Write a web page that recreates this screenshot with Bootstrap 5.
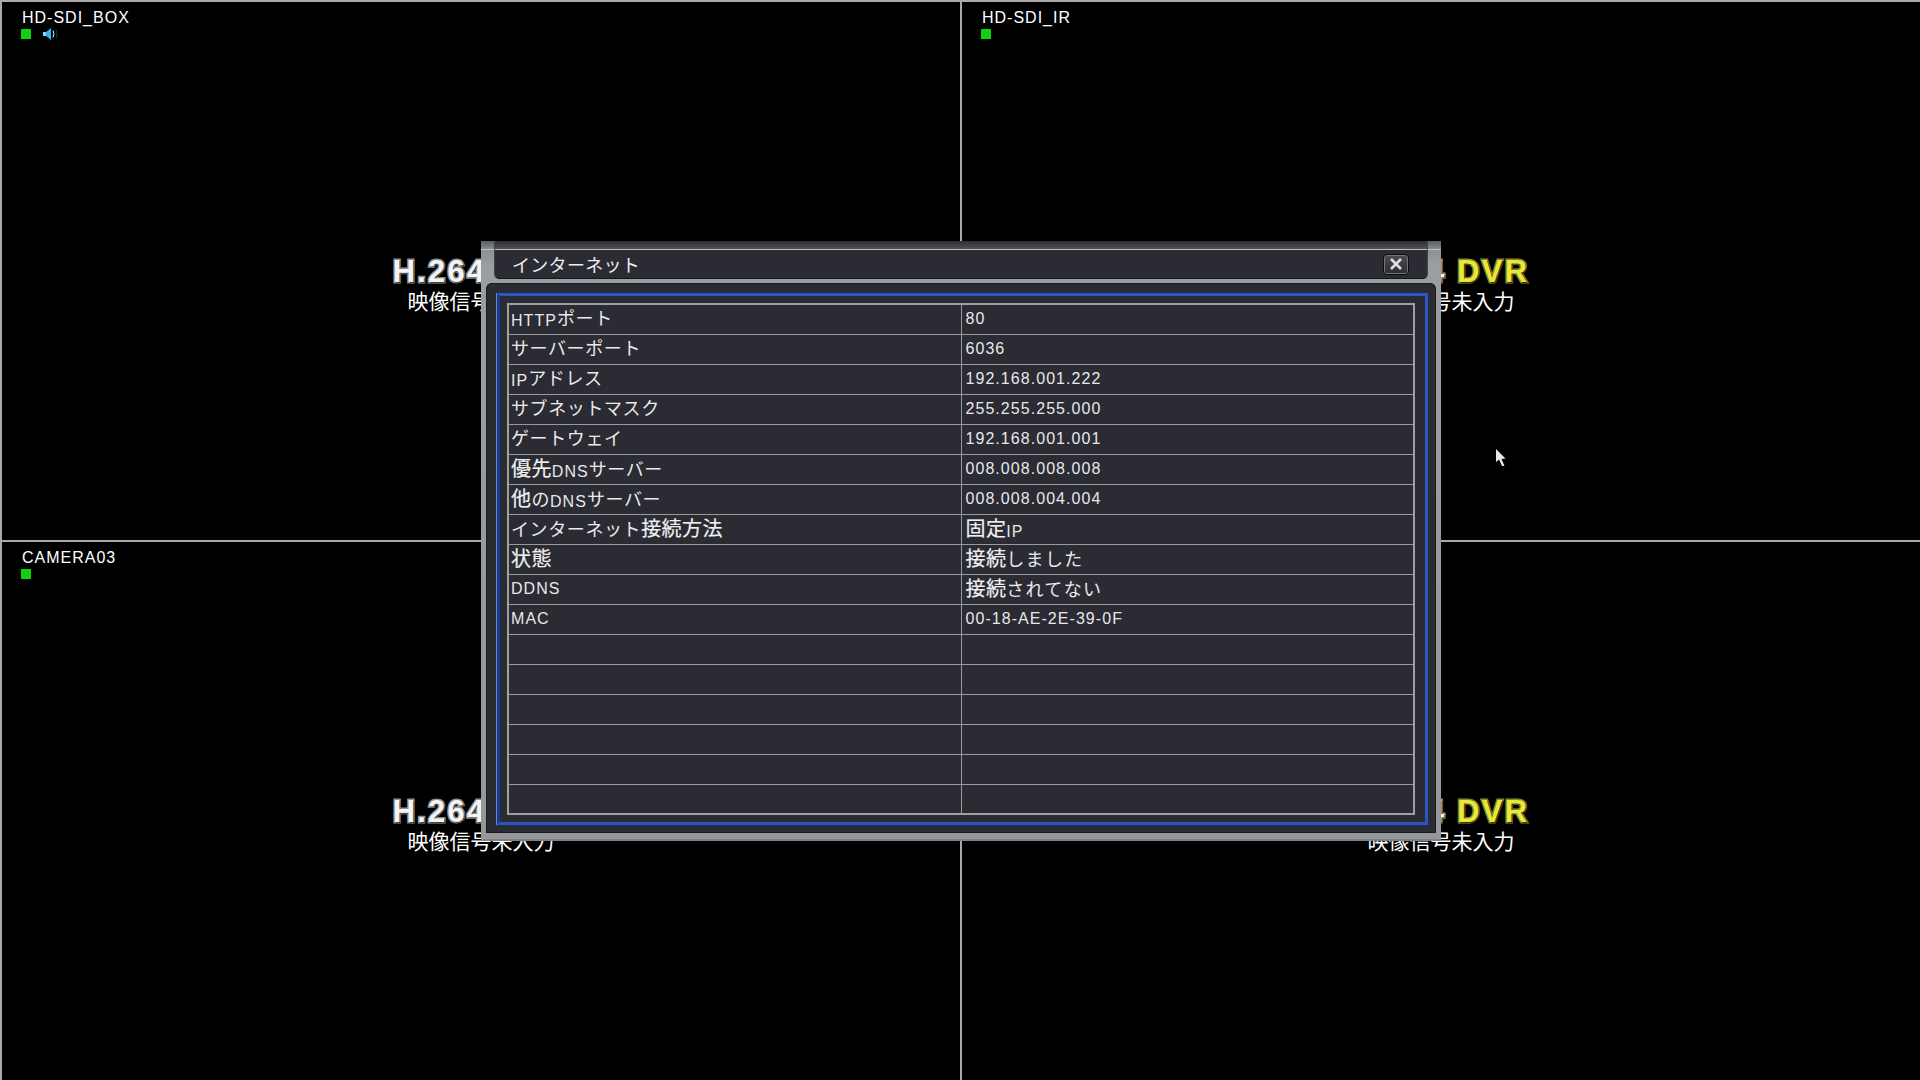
<!doctype html>
<html lang="ja">
<head>
<meta charset="utf-8">
<title>インターネット</title>
<link rel="stylesheet" href="https://cdn.jsdelivr.net/npm/bootstrap@5.3.0/dist/css/bootstrap.min.css">
<style>
html,body{height:100%;margin:0;background:#000;overflow:hidden}
body{font-family:"Liberation Sans","Noto Sans CJK JP",sans-serif;color:#e4e4e4;position:relative}
.wall{display:grid;grid-template-columns:960px 960px;grid-template-rows:540px 540px;width:1920px;height:1080px}
.tile{border-top:2px solid #a8a8a8;border-left:2px solid #a8a8a8;position:relative;display:flex;flex-direction:column;align-items:center;justify-content:center;padding-top:25px}
.cam-label{position:absolute;left:20px;top:7px;font-size:16px;line-height:18px;letter-spacing:1px;color:#fff;white-space:nowrap}
.cam-status{position:absolute;left:19px;top:27px;display:flex;align-items:center;gap:12px;height:10px}
.rec-dot{display:block;width:10px;height:10px;background:#10d010}
.logo-line{font-weight:700;font-size:31px;line-height:32px;letter-spacing:2.2px;white-space:nowrap;color:#f4f4f4;-webkit-text-stroke:3px #8e8e8e;paint-order:stroke fill;text-shadow:1px 1px 0 #444}
.logo-dvr{color:#e8e83a;-webkit-text-stroke:3px #85852e;text-shadow:1px 1px 0 #33330e}
.no-signal{font-size:21px;line-height:24px;color:#fff;font-family:"Noto Sans CJK JP",sans-serif;font-weight:400;white-space:nowrap}
.dlg{position:absolute;left:481px;top:241px;width:960px;height:600px;background-image:linear-gradient(to bottom,#5a5e60 0,#868a8c 8px,#c4c4c4 8px,#c4c4c4 9px,#8d9193 9px,#9a9ea0 24px,#94989a 100%);display:flex;flex-direction:column;box-shadow:inset 0 -2px 0 #7f8385}
.dlg-head{margin:0 13px;height:38px;background:linear-gradient(to bottom,#2e2f33 0,#505256 8px,#c0c0c0 8px,#c0c0c0 9px,#2a2b33 9px);border-left:1px solid #44464a;border-right:1px solid #44464a;border-bottom:1px solid #14151a;border-radius:0 0 5px 5px;display:flex;align-items:center;justify-content:space-between;padding:9px 18px 0 17px;flex:none}
.dlg-title{font-family:"Noto Sans CJK JP",sans-serif;font-weight:400;font-size:18px;letter-spacing:.3px;color:#eee;line-height:22px}
.dlg-close{width:26px;height:21px;padding:0;border:1px solid #0d0d0f;border-radius:4px;background:linear-gradient(to bottom,#4c4e52,#2a2b2f);display:flex;align-items:center;justify-content:center;box-shadow:inset 0 0 0 1px #74767a}
.dlg-body{flex:1;margin:4px 5px 8px 5px;background:#2a2b33;border-radius:6px 6px 0 0;padding:10px 8px 8px 11px;box-shadow:inset 0 0 0 1px #1a1b20;min-height:0}
.blue-frame{height:100%;border:3px solid #2c55c4;border-left-color:#143aa0;padding:7px 10px 8px 7px;box-shadow:-1px 0 0 #7c84a0}
.grid-table{width:908px;margin:0;table-layout:fixed;border-collapse:collapse;border:2px solid #a0a0a0;--bs-table-bg:transparent;--bs-table-color:#e0e0e0;color:#e0e0e0}
.grid-table td{height:30px;padding:0 0 2px 2px;border:1px solid #9a9a9a;vertical-align:middle;line-height:1;background:transparent;white-space:nowrap;overflow:hidden}
.grid-table td+td{padding-left:4px}
.lat{font-size:16px;letter-spacing:1.05px;line-height:1;color:#e8e8e8;position:relative;top:1px}
.jp{font-family:"Noto Sans CJK JP",sans-serif;font-weight:400;font-size:18px;letter-spacing:.6px;line-height:1;color:#eaeaea}
.jp-wide{letter-spacing:1.300px}
.kan{font-family:"Noto Sans CJK JP",sans-serif;font-weight:400;font-size:20px;letter-spacing:.4px;line-height:1;color:#f0f0f0;-webkit-text-stroke:.2px #f0f0f0}
.mouse{position:absolute;left:1495px;top:448px}
</style>
</head>
<body>
<div class="wall">
  <div class="tile">
    <div class="cam-label">HD-SDI_BOX</div>
    <div class="cam-status"><span class="rec-dot"></span>
      <svg width="16" height="12" viewBox="0 0 16 12"><rect x="0" y="4" width="3" height="4" fill="#7fd8f0"/><path d="M3 4 8 0v12L3 8z" fill="#35b5e0"/><path d="M10 2.500q2 3.500 0 7" fill="none" stroke="#d8f0f8" stroke-width="1"/><path d="M13 1.500q2.500 4.500 0 9" fill="none" stroke="#0c3f58" stroke-width="1"/></svg>
    </div>
    <div class="logo-line">H.264 <span class="logo-dvr">DVR</span></div>
    <div class="no-signal">映像信号未入力</div>
  </div>
  <div class="tile">
    <div class="cam-label">HD-SDI_IR</div>
    <div class="cam-status"><span class="rec-dot"></span></div>
    <div class="logo-line">H.264 <span class="logo-dvr">DVR</span></div>
    <div class="no-signal">映像信号未入力</div>
  </div>
  <div class="tile">
    <div class="cam-label">CAMERA03</div>
    <div class="cam-status"><span class="rec-dot"></span></div>
    <div class="logo-line">H.264 <span class="logo-dvr">DVR</span></div>
    <div class="no-signal">映像信号未入力</div>
  </div>
  <div class="tile">
    <div class="logo-line">H.264 <span class="logo-dvr">DVR</span></div>
    <div class="no-signal">映像信号未入力</div>
  </div>
</div>

<div class="dlg">
  <div class="dlg-head">
    <span class="dlg-title">インターネット</span>
    <button class="dlg-close" type="button" aria-label="閉じる"><svg width="14" height="12" viewBox="0 0 14 12"><path d="M2 1 12 11M12 1 2 11" stroke="#dedede" stroke-width="2.600" fill="none"/></svg></button>
  </div>
  <div class="dlg-body">
    <div class="blue-frame">
      <table class="table grid-table">
        <tbody>
        <tr><td><span class="lat">HTTP</span><span class="jp">ポート</span></td><td><span class="lat">80</span></td></tr>
        <tr><td><span class="jp">サーバーポート</span></td><td><span class="lat">6036</span></td></tr>
        <tr><td><span class="lat">IP</span><span class="jp">アドレス</span></td><td><span class="lat">192.168.001.222</span></td></tr>
        <tr><td><span class="jp">サブネットマスク</span></td><td><span class="lat">255.255.255.000</span></td></tr>
        <tr><td><span class="jp">ゲートウェイ</span></td><td><span class="lat">192.168.001.001</span></td></tr>
        <tr><td><span class="kan">優先</span><span class="lat">DNS</span><span class="jp">サーバー</span></td><td><span class="lat">008.008.008.008</span></td></tr>
        <tr><td><span class="kan">他</span><span class="jp">の</span><span class="lat">DNS</span><span class="jp">サーバー</span></td><td><span class="lat">008.008.004.004</span></td></tr>
        <tr><td><span class="jp">インターネット</span><span class="kan">接続方法</span></td><td><span class="kan">固定</span><span class="lat">IP</span></td></tr>
        <tr><td><span class="kan">状態</span></td><td><span class="kan">接続</span><span class="jp jp-wide">しました</span></td></tr>
        <tr><td><span class="lat">DDNS</span></td><td><span class="kan">接続</span><span class="jp jp-wide">されてない</span></td></tr>
        <tr><td><span class="lat">MAC</span></td><td><span class="lat">00-18-AE-2E-39-0F</span></td></tr>
        <tr><td></td><td></td></tr>
        <tr><td></td><td></td></tr>
        <tr><td></td><td></td></tr>
        <tr><td></td><td></td></tr>
        <tr><td></td><td></td></tr>
        <tr><td></td><td></td></tr>
        </tbody>
      </table>
    </div>
  </div>
</div>

<svg class="mouse" width="12" height="20" viewBox="0 0 12 20"><path d="M1 1 1 14 4 11.500 7 18 9.500 18 6.500 11 10.500 10.500z" fill="#e8e8e8"/></svg>

<script src="https://cdn.jsdelivr.net/npm/bootstrap@5.3.0/dist/js/bootstrap.bundle.min.js"></script>
</body>
</html>
